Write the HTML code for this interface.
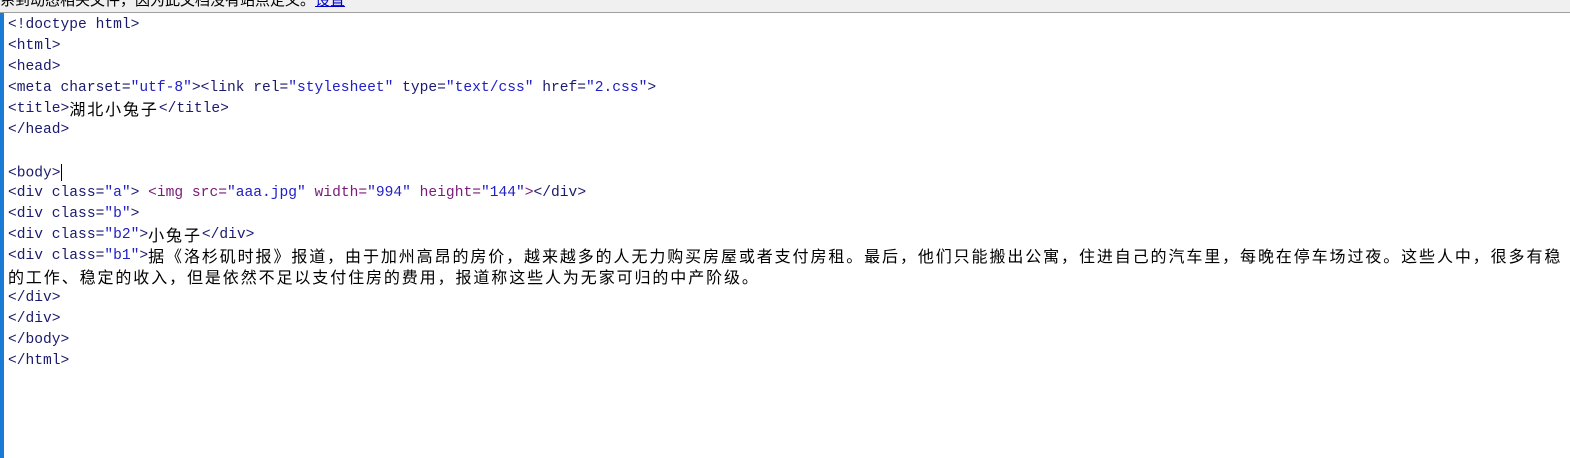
<!DOCTYPE html>
<html><head><meta charset="utf-8">
<style>
html,body{margin:0;padding:0;width:1570px;height:458px;overflow:hidden;background:#fff;}
.top{position:absolute;left:0;top:0;width:1570px;height:12px;background:#f0f0f0;border-bottom:1px solid #a0a0a0;overflow:hidden;}
.top span{position:absolute;left:0;top:-11px;font:15px "Noto Sans CJK SC","WenQuanYi Zen Hei",sans-serif;color:#000;white-space:pre;}
.top a{color:#0000cc;text-decoration:underline;}
.bar{position:absolute;left:0;top:13px;width:4px;height:445px;background:#1a7ad6;}
.code{position:absolute;left:8px;top:17px;white-space:pre;}
.l{position:absolute;left:0;height:21px;line-height:21px;font:14.6px "Liberation Mono",monospace;color:#000;white-space:pre;}
.t{color:#1a1a6e;}
.v{color:#2020c8;}
.p{color:#7a1a7a;}
.c{font:16px "Noto Sans CJK SC","WenQuanYi Zen Hei",sans-serif;letter-spacing:1.9px;line-height:0;color:#000;vertical-align:middle;}
.cur{display:inline-block;width:1px;height:17px;background:#000;vertical-align:middle;}
</style></head><body>
<div class="top"><span>系到动态相关文件，因为此文档没有站点定义。<a>设置</a></span></div>
<div class="bar"></div>
<div class="code">
<div class="l t" style="top:0">&lt;!doctype html&gt;</div>
<div class="l t" style="top:21px">&lt;html&gt;</div>
<div class="l t" style="top:42px">&lt;head&gt;</div>
<div class="l t" style="top:63px">&lt;meta charset=<span class="v">"utf-8"</span>&gt;&lt;link rel=<span class="v">"stylesheet"</span> type=<span class="v">"text/css"</span> href=<span class="v">"2.css"</span>&gt;</div>
<div class="l t" style="top:84px">&lt;title&gt;<span class="c">湖北小兔子</span>&lt;/title&gt;</div>
<div class="l t" style="top:105px">&lt;/head&gt;</div>
<div class="l t" style="top:147px">&lt;body&gt;<span class="cur"></span></div>
<div class="l t" style="top:168px">&lt;div class=<span class="v">"a"</span>&gt; <span class="p">&lt;img src=<span class="v">"aaa.jpg"</span> width=<span class="v">"994"</span> height=<span class="v">"144"</span>&gt;</span>&lt;/div&gt;</div>
<div class="l t" style="top:189px">&lt;div class=<span class="v">"b"</span>&gt;</div>
<div class="l t" style="top:210px">&lt;div class=<span class="v">"b2"</span>&gt;<span class="c">小兔子</span>&lt;/div&gt;</div>
<div class="l t" style="top:231px">&lt;div class=<span class="v">"b1"</span>&gt;<span class="c">据《洛杉矶时报》报道，由于加州高昂的房价，越来越多的人无力购买房屋或者支付房租。最后，他们只能搬出公寓，住进自己的汽车里，每晚在停车场过夜。这些人中，很多有稳</span></div>
<div class="l t" style="top:252px"><span class="c">的工作、稳定的收入，但是依然不足以支付住房的费用，报道称这些人为无家可归的中产阶级。</span></div>
<div class="l t" style="top:273px">&lt;/div&gt;</div>
<div class="l t" style="top:294px">&lt;/div&gt;</div>
<div class="l t" style="top:315px">&lt;/body&gt;</div>
<div class="l t" style="top:336px">&lt;/html&gt;</div>
</div>
</body></html>
